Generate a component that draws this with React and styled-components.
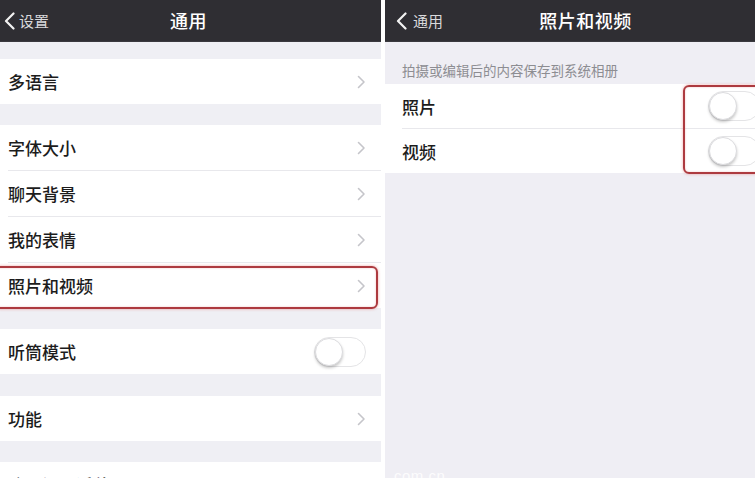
import React from "react";
import styled, { createGlobalStyle } from "styled-components";

const GlobalStyle = createGlobalStyle`
  html, body { margin: 0; padding: 0; background: #ffffff; }
  body { font-family: "Noto Sans CJK SC", "Noto Sans", sans-serif; }
  * { box-sizing: border-box; }
`;

const Page = styled.div`
  display: flex;
  gap: 4px;
  width: 755px;
  height: 478px;
  overflow: hidden;
  background: #ffffff;
`;

const Panel = styled.div`
  position: relative;
  flex: 0 0 ${(p) => p.$width}px;
  width: ${(p) => p.$width}px;
  height: 478px;
  display: flex;
  flex-direction: column;
  background: ${(p) => p.$bg || "#efeff4"};
  overflow: hidden;
`;

const Header = styled.div`
  flex: 0 0 42px;
  height: 42px;
  display: grid;
  grid-template-columns: 1fr auto 1fr;
  align-items: center;
  background: #2f2e33;
  padding: 0 ${(p) => p.$padRight || 0}px 0 ${(p) => p.$padLeft || 4}px;
  border-bottom: 1px solid #3a393e;
`;

const Back = styled.div`
  display: flex;
  align-items: center;
  gap: ${(p) => p.$gap || 4}px;
  color: #d9d9dc;
  font-size: 15px;
  line-height: 1;
`;

const Title = styled.div`
  color: #ffffff;
  font-size: 18px;
  font-weight: 500;
  letter-spacing: 0.5px;
  line-height: 1;
  padding-bottom: 2px;
`;

const Gap = styled.div`
  flex: 0 0 ${(p) => p.$h}px;
  height: ${(p) => p.$h}px;
`;

const Group = styled.div`
  position: relative;
  background: #ffffff;
  display: flex;
  flex-direction: column;
`;

const Row = styled.div`
  height: ${(p) => p.$h || 45}px;
  display: flex;
  align-items: center;
  justify-content: space-between;
  padding: 0 15px 0 ${(p) => p.$pl || 8}px;
  color: #1c1c1c;
  font-size: ${(p) => p.$fs || 17}px;
  font-weight: 500;
  line-height: 1;
`;

const Separator = styled.div`
  height: 1px;
  margin-left: ${(p) => p.$ml || 8}px;
  background: #e8e8ec;
`;

const SectionHeader = styled.div`
  flex: 0 0 42px;
  height: 42px;
  display: flex;
  align-items: flex-end;
  padding: 0 0 7px 17px;
  color: #8d8d92;
  font-size: 13.5px;
  line-height: 1;
`;

const Toggle = styled.div`
  width: 52px;
  height: 30px;
  border-radius: 16px;
  border: 1.5px solid #e4e4e6;
  background: #ffffff;
  display: flex;
  align-items: center;
  padding: 0;
`;

const Knob = styled.div`
  width: 28px;
  height: 28px;
  border-radius: 50%;
  background: #ffffff;
  border: 1px solid #dcdcdf;
  box-shadow: 0 2px 3px rgba(0, 0, 0, 0.22);
`;

const Highlight = styled.div`
  position: absolute;
  top: ${(p) => p.$top}px;
  bottom: ${(p) => p.$bottom}px;
  left: ${(p) => p.$left}px;
  right: ${(p) => p.$right}px;
  border: 2.5px solid #ad3a3f;
  border-radius: 6px;
  box-shadow: 0 0 3px rgba(220, 90, 90, 0.55), inset 0 0 2px rgba(220, 90, 90, 0.4);
  pointer-events: none;
`;

const Watermark = styled.div`
  position: absolute;
  left: 9px;
  bottom: -6px;
  color: rgba(255, 255, 255, 0.85);
  font-family: "Liberation Sans", sans-serif;
  font-size: 15px;
  letter-spacing: 0.5px;
`;

const Chevron = () => (
  <svg width="9" height="14" viewBox="0 0 9 14">
    <polyline
      points="1.5,1.5 7,7 1.5,12.5"
      fill="none"
      stroke="#c5c5ca"
      strokeWidth="1.6"
      strokeLinecap="round"
      strokeLinejoin="round"
    />
  </svg>
);

const BackArrow = () => (
  <svg width="11" height="18" viewBox="0 0 11 18">
    <polyline
      points="9.5,1.5 2,9 9.5,16.5"
      fill="none"
      stroke="#f2f2f2"
      strokeWidth="2.2"
      strokeLinecap="round"
      strokeLinejoin="round"
    />
  </svg>
);

const Switch = () => (
  <Toggle>
    <Knob />
  </Toggle>
);

const NavRow = ({ label }) => (
  <Row>
    <span>{label}</span>
    <Chevron />
  </Row>
);

export default function App() {
  return (
    <>
      <GlobalStyle />
      <Page>
        <Panel $width={381}>
          <Header $padRight={8}>
            <Back>
              <BackArrow />
              <span>设置</span>
            </Back>
            <Title>通用</Title>
            <div />
          </Header>
          <Gap $h={17} />
          <Group>
            <NavRow label="多语言" />
          </Group>
          <Gap $h={21} />
          <Group>
            <NavRow label="字体大小" />
            <Separator />
            <NavRow label="聊天背景" />
            <Separator />
            <NavRow label="我的表情" />
            <Separator />
            <NavRow label="照片和视频" />
            <Highlight $top={141} $bottom={-1} $left={-6} $right={3} />
          </Group>
          <Gap $h={21} />
          <Group>
            <Row>
              <span>听筒模式</span>
              <Switch />
            </Row>
          </Group>
          <Gap $h={22} />
          <Group>
            <NavRow label="功能" />
          </Group>
          <Gap $h={21} />
          <Group>
            <Row>
              <span>聊天记录迁移</span>
            </Row>
          </Group>
        </Panel>

        <Panel $width={390} $bg="#efeef4">
          <Header $padLeft={11}>
            <Back $gap={6}>
              <BackArrow />
              <span>通用</span>
            </Back>
            <Title>照片和视频</Title>
            <div />
          </Header>
          <SectionHeader>拍摄或编辑后的内容保存到系统相册</SectionHeader>
          <Group>
            <Row $h={44} $pl={17}>
              <span>照片</span>
              <Switch />
            </Row>
            <Separator $ml={17} />
            <Row $h={44} $pl={17}>
              <span>视频</span>
              <Switch />
            </Row>
            <Highlight $top={1} $bottom={-1} $left={298} $right={-10} />
          </Group>
          <Watermark>com.cn</Watermark>
        </Panel>
      </Page>
    </>
  );
}
